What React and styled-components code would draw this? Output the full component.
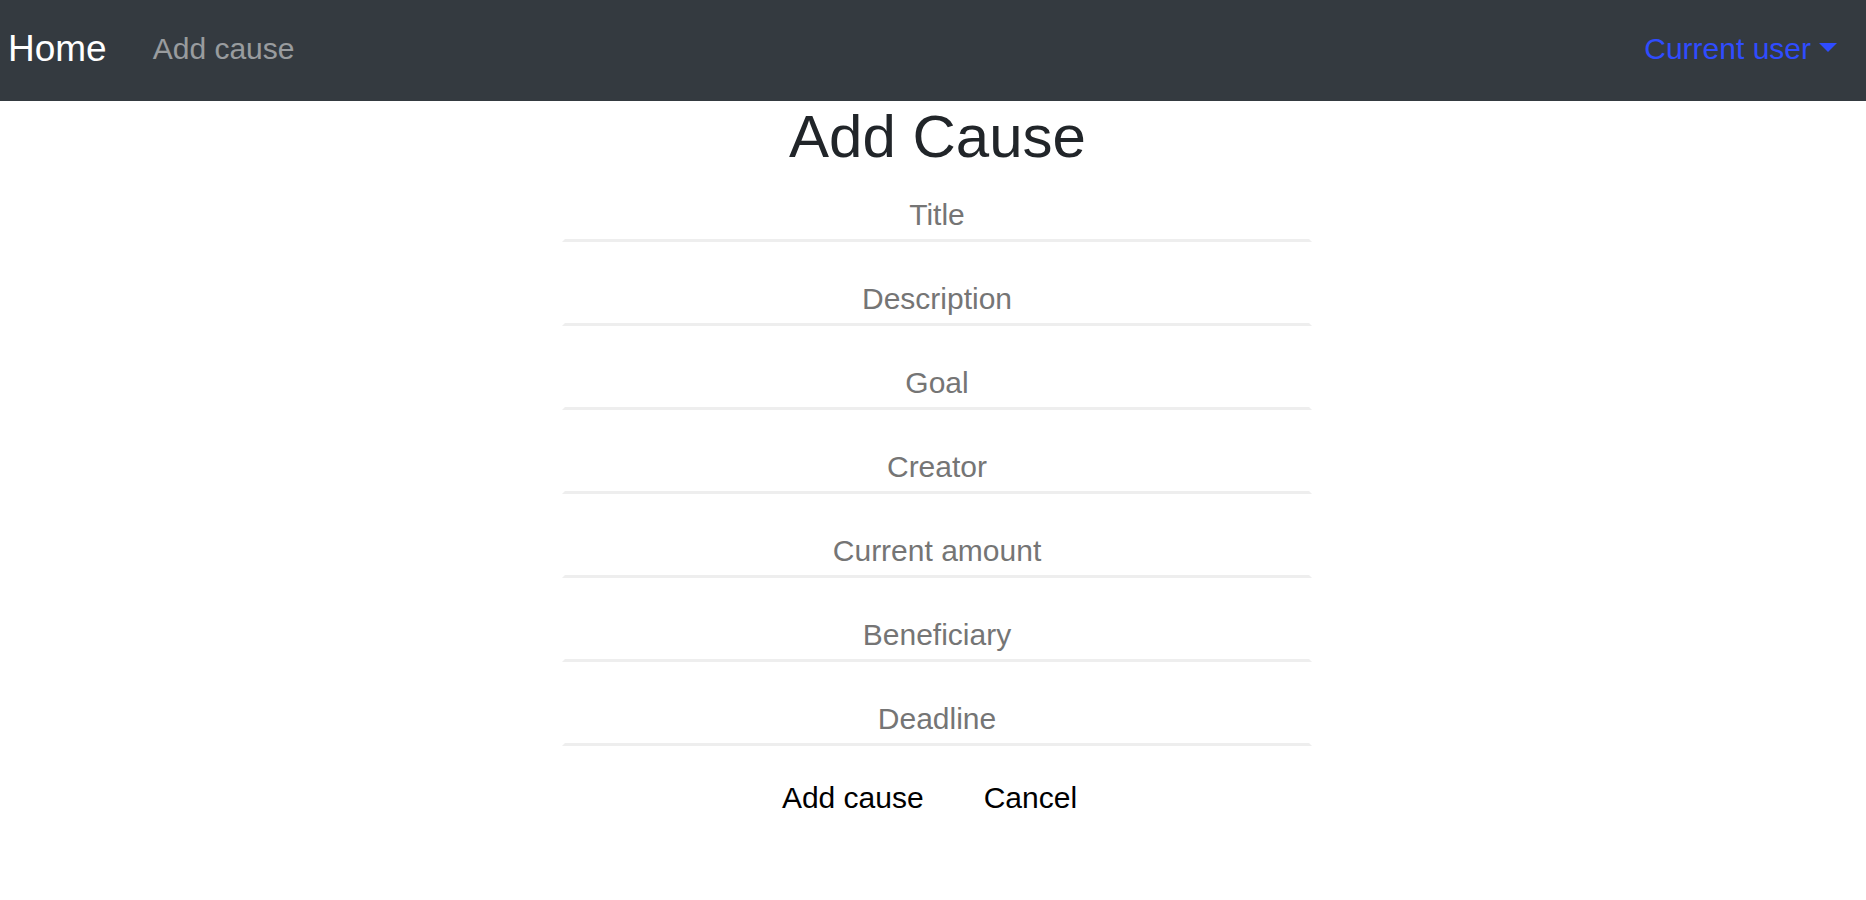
import React from 'react';
import styled, { createGlobalStyle } from 'styled-components';

const GlobalStyle = createGlobalStyle`
  html, body {
    margin: 0;
    padding: 0;
    background: #fff;
    font-family: "Liberation Sans", Arial, sans-serif;
    color: #212529;
  }
  * {
    box-sizing: border-box;
  }
`;

const NavBar = styled.nav`
  display: flex;
  align-items: center;
  height: 101px;
  padding: 0 29px 3px 8px;
  background-color: #343a40;
`;

const Brand = styled.a`
  font-size: 37px;
  color: #fff;
  text-decoration: none;
  margin-right: 46px;
`;

const NavLink = styled.a`
  font-size: 30px;
  color: rgba(255, 255, 255, 0.5);
  text-decoration: none;
`;

const UserMenu = styled.a`
  display: flex;
  align-items: center;
  margin-left: auto;
  font-size: 30px;
  color: #2f4cff;
  text-decoration: none;

  &::after {
    content: '';
    display: inline-block;
    margin-left: 8px;
    margin-top: -4px;
    border-top: 9px solid #2f4cff;
    border-left: 9px solid transparent;
    border-right: 9px solid transparent;
  }
`;

const Main = styled.main`
  display: flex;
  flex-direction: column;
  align-items: center;
`;

const Heading = styled.h1`
  margin: 0 0 11px 9px;
  font-size: 60px;
  font-weight: 400;
  line-height: 72px;
  color: #212529;
`;

const Form = styled.form`
  display: flex;
  flex-direction: column;
  align-items: center;
  gap: 26px;
`;

const Field = styled.input`
  display: block;
  width: 750px;
  height: 58px;
  margin-left: 8px;
  padding: 6px 0 0;
  border-width: 0 3px 3px;
  border-style: solid;
  border-color: transparent transparent #eeeeee;
  background: transparent;
  font-family: inherit;
  font-size: 30px;
  text-align: center;
  color: #212529;
  outline: none;

  &::placeholder {
    color: #757575;
  }
`;

const Actions = styled.div`
  display: flex;
  gap: 24px;
  margin-top: -6px;
  margin-right: 7px;
`;

const Button = styled.button`
  padding: 9px 18px;
  border: none;
  background: transparent;
  font-family: inherit;
  font-size: 30px;
  line-height: 45px;
  color: #000;
  cursor: pointer;
`;

const fields = [
  'Title',
  'Description',
  'Goal',
  'Creator',
  'Current amount',
  'Beneficiary',
  'Deadline',
];

export default function App() {
  return (
    <>
      <GlobalStyle />
      <NavBar>
        <Brand href="#">Home</Brand>
        <NavLink href="#">Add cause</NavLink>
        <UserMenu href="#">Current user</UserMenu>
      </NavBar>
      <Main>
        <Heading>Add Cause</Heading>
        <Form onSubmit={(e) => e.preventDefault()}>
          {fields.map((name) => (
            <Field key={name} type="text" placeholder={name} />
          ))}
          <Actions>
            <Button type="submit">Add cause</Button>
            <Button type="button">Cancel</Button>
          </Actions>
        </Form>
      </Main>
    </>
  );
}
